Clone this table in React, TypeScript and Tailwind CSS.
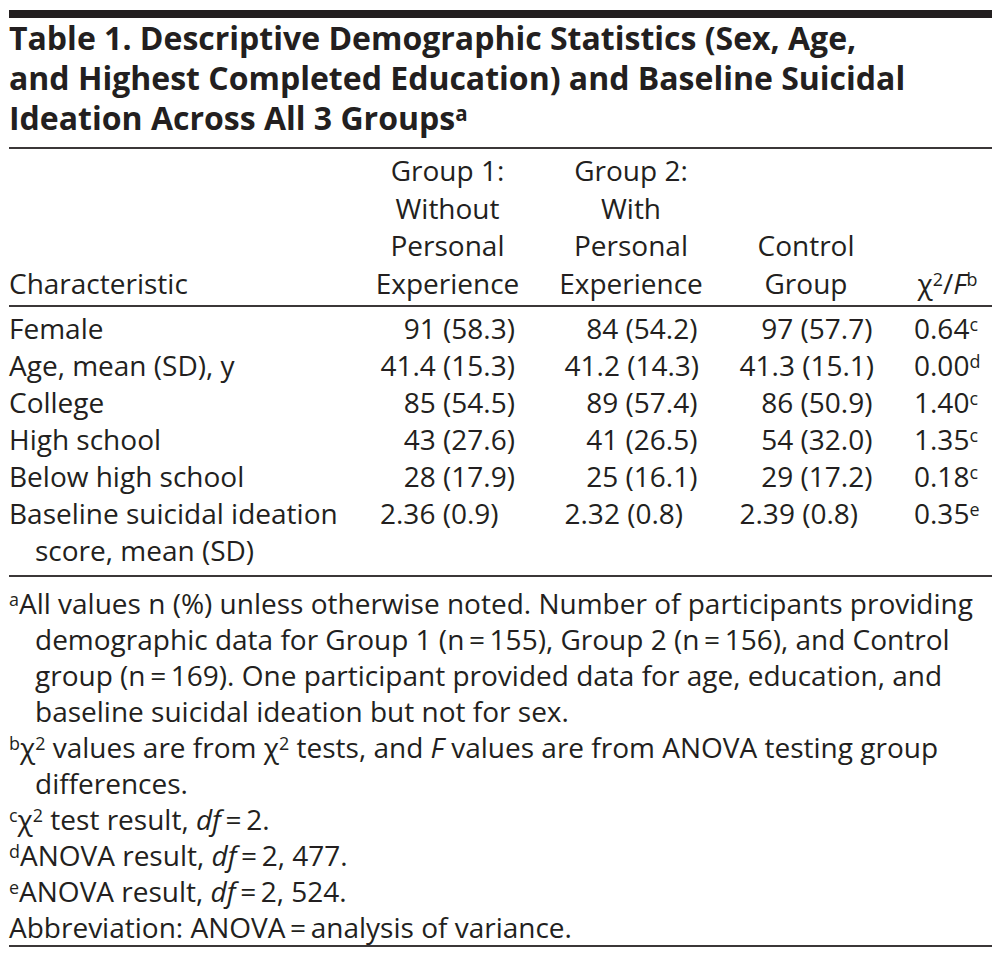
import React from "react";

type Row = {
  label: string[];
  g1: string;
  g2: string;
  ctrl: string;
  stat: string;
  sup: string;
  left?: boolean;
};

const rows: Row[] = [
  { label: ["Female"], g1: "91 (58.3)", g2: "84 (54.2)", ctrl: "97 (57.7)", stat: "0.64", sup: "c" },
  { label: ["Age, mean (SD), y"], g1: "41.4 (15.3)", g2: "41.2 (14.3)", ctrl: "41.3 (15.1)", stat: "0.00", sup: "d" },
  { label: ["College"], g1: "85 (54.5)", g2: "89 (57.4)", ctrl: "86 (50.9)", stat: "1.40", sup: "c" },
  { label: ["High school"], g1: "43 (27.6)", g2: "41 (26.5)", ctrl: "54 (32.0)", stat: "1.35", sup: "c" },
  { label: ["Below high school"], g1: "28 (17.9)", g2: "25 (16.1)", ctrl: "29 (17.2)", stat: "0.18", sup: "c" },
  {
    label: ["Baseline suicidal ideation", "score, mean (SD)"],
    g1: "2.36 (0.9)",
    g2: "2.32 (0.8)",
    ctrl: "2.39 (0.8)",
    stat: "0.35",
    sup: "e",
    left: true,
  },
];

// superscript that doesn't push the line box around
const Sup = ({ children }: { children: React.ReactNode }) => (
  <span className="relative -top-[0.42em] text-[0.64em] leading-none">{children}</span>
);

// equals sign with thin spaces, like the print layout
const Eq = () => <>{"\u2009=\u2009"}</>;

function NumCell({ value, width, left }: { value: string; width: string; left?: boolean }) {
  return (
    <div className="flex justify-center">
      <div className={`${width} whitespace-nowrap ${left ? "text-left" : "text-right"}`}>{value}</div>
    </div>
  );
}

export default function App() {
  return (
    <div
      className="w-[1006px] h-[959px] bg-white text-[#231f20] pt-[10px] pl-[9px]"
      style={{ fontFamily: '"Open Sans", "Noto Sans", sans-serif' }}
    >
      <div className="w-[983px]">
        <div className="h-[8px] bg-[#231f20]" />

        <h1 className="text-[32px] font-bold leading-[40px] pb-[9px] whitespace-nowrap">
          <span className="block">Table 1. Descriptive Demographic Statistics (Sex, Age,</span>
          <span className="block">and Highest Completed Education) and Baseline Suicidal</span>
          <span className="block">
            Ideation Across All 3 Groups<Sup>a</Sup>
          </span>
        </h1>

        <div className="h-[2px] bg-[#3b3738]" />

        {/* header */}
        <div className="grid grid-cols-[333px_155px_156px_138px_89px] gap-x-[28px] items-end text-[28px] leading-[37.5px] pt-[3px] pb-[3px]">
          <div>Characteristic</div>
          <div className="text-center">
            <div>Group 1:</div>
            <div>Without</div>
            <div>Personal</div>
            <div>Experience</div>
          </div>
          <div className="text-center">
            <div>Group 2:</div>
            <div>With</div>
            <div>Personal</div>
            <div>Experience</div>
          </div>
          <div className="text-center">
            <div>Control</div>
            <div>Group</div>
          </div>
          <div className="text-center whitespace-nowrap">
            χ<Sup>2</Sup>/<i>F</i>
            <Sup>b</Sup>
          </div>
        </div>

        <div className="h-[2px] bg-[#3b3738]" />

        {/* body */}
        <div className="grid grid-cols-[333px_155px_156px_138px_89px] gap-x-[28px] items-start text-[28px] leading-[37px] pt-[3px] pb-[6px]">
          {rows.map((r) => (
            <React.Fragment key={r.label[0]}>
              <div className="whitespace-nowrap">
                <div>{r.label[0]}</div>
                {r.label[1] && <div className="pl-[26px]">{r.label[1]}</div>}
              </div>
              <NumCell value={r.g1} width="w-[135px]" left={r.left} />
              <NumCell value={r.g2} width="w-[133px]" left={r.left} />
              <NumCell value={r.ctrl} width="w-[133px]" left={r.left} />
              <div className="flex justify-center">
                <div className="w-[67px] whitespace-nowrap">
                  {r.stat}
                  <Sup>{r.sup}</Sup>
                </div>
              </div>
            </React.Fragment>
          ))}
        </div>

        <div className="h-[2px] bg-[#3b3738]" />

        {/* footnotes */}
        <div className="text-[28px] leading-[36px] pt-[8px] whitespace-nowrap">
          <div>
            <Sup>a</Sup>All values n (%) unless otherwise noted. Number of participants providing
          </div>
          <div className="pl-[26px]">
            demographic data for Group 1 (n<Eq />155), Group 2 (n<Eq />156), and Control
          </div>
          <div className="pl-[26px]">
            group (n<Eq />169). One participant provided data for age, education, and
          </div>
          <div className="pl-[26px]">baseline suicidal ideation but not for sex.</div>
          <div>
            <Sup>b</Sup>χ<Sup>2</Sup> values are from χ<Sup>2</Sup> tests, and <i>F</i> values are from ANOVA testing group
          </div>
          <div className="pl-[26px]">differences.</div>
          <div>
            <Sup>c</Sup>χ<Sup>2</Sup> test result, <i>df</i>
            <Eq />2.
          </div>
          <div>
            <Sup>d</Sup>ANOVA result, <i>df</i>
            <Eq />2, 477.
          </div>
          <div>
            <Sup>e</Sup>ANOVA result, <i>df</i>
            <Eq />2, 524.
          </div>
          <div>
            Abbreviation: ANOVA<Eq />analysis of variance.
          </div>
        </div>

        <div className="h-[2px] bg-[#3b3738]" />
      </div>
    </div>
  );
}
